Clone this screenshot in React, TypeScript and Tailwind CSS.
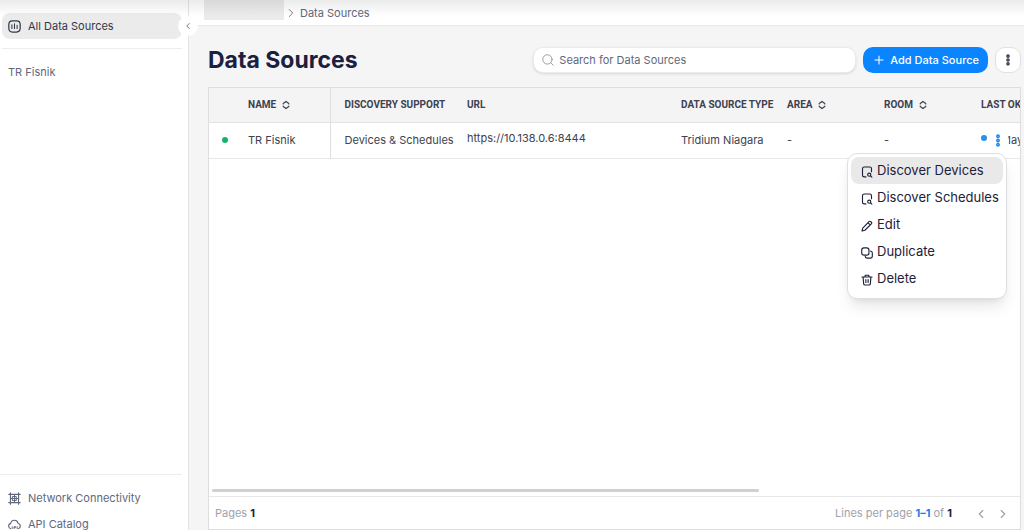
import { ChevronLeft, ChevronRight, Plus, Search } from 'lucide-react'
import type { ReactNode } from 'react'

type IconProps = { className?: string }

const Icon = ({ className = '', children }: IconProps & { children: ReactNode }) => (
  <svg
    viewBox="0 0 16 16"
    fill="none"
    stroke="currentColor"
    strokeWidth="1.5"
    strokeLinecap="round"
    strokeLinejoin="round"
    className={`shrink-0 ${className}`}
    aria-hidden="true"
  >
    {children}
  </svg>
)

const DataSourcesIcon = ({ className }: IconProps) => (
  <Icon className={className}>
    <path d="M5.5 1.2h5c2.900 0 4.500 1.500 4.500 4.500v4.600c0 3-1.600 4.500-4.500 4.500h-5C2.600 14.800 1 13.300 1 10.300V5.700c0-3 1.600-4.500 4.500-4.500z" />
    <path d="M4.800 6v4.500M8 4.800v5.700M11.200 6.500v4" strokeWidth="1.300" />
  </Icon>
)

const NetworkIcon = ({ className }: IconProps) => (
  <Icon className={className}>
    <path d="M1 3h14M1 13h14M3 1v14M13 1v14" strokeWidth="1.400" />
    <path d="M5.800 5.500h4.400v5H5.800zM8 3v10M3 8h10" strokeWidth="1.200" />
  </Icon>
)

const CatalogIcon = ({ className }: IconProps) => (
  <Icon className={className}>
    <path d="M3.500 13.200C-.4 12.200.2 7 3.300 6.900 4 1.400 11.500 1.600 12.200 6.500c3.700.5 3.900 5.700.5 6.700" strokeWidth="1.400" />
    <path d="M5.200 13v-2.400M7.600 13v-2.400h1.700v1.300H7.600M11.200 10.600V13" strokeWidth="1.100" />
  </Icon>
)

const DiscoverIcon = ({ className }: IconProps) => (
  <Icon className={className}>
    <path d="M6.500 14.500H4.300C2.800 14.500 2 13.700 2 12.200V3.600C2 2.100 2.800 1.300 4.300 1.300h7.400c1.500 0 2.300.8 2.300 2.300v4" />
    <circle cx="11" cy="11.600" r="2.100" />
    <path d="M12.800 13.300l1.700 1.500" />
  </Icon>
)

const EditIcon = ({ className }: IconProps) => (
  <Icon className={className}>
    <path d="M1.300 14.700l1-3.900 8.400-8.600c.7-.7 1.600-.7 2.300 0l.8.800c.7.700.7 1.600 0 2.300l-8.600 8.400zM9.400 3.700l2.900 2.900" />
  </Icon>
)

const DuplicateIcon = ({ className }: IconProps) => (
  <Icon className={className}>
    <rect x="1" y="1.200" width="9.600" height="9.600" rx="2.900" />
    <path d="M12.600 5.400c1.600.1 2.500 1 2.500 2.600v4c0 1.800-1 2.800-2.800 2.800h-4c-1.600 0-2.500-.8-2.600-2.300" />
  </Icon>
)

const DeleteIcon = ({ className }: IconProps) => (
  <Icon className={className}>
    <path d="M1.200 4h13.600M5.200 3.800l.5-2.200h4.600l.5 2.200M2.800 4.200l.7 8.600c.1 1.300.7 1.900 2 1.900h5c1.300 0 1.900-.6 2-1.900l.7-8.600M6.500 7.300v3.900M9.500 7.300v3.900" />
  </Icon>
)

const SortIcon = () => (
  <Icon className="h-[10px] w-2">
    <path d="M2.500 6V4.800L8 .8l5.500 4V6M2.500 10v1.200l5.500 4 5.500-4V10" strokeWidth="2.400" />
  </Icon>
)

const DotsIcon = ({ className = '' }: IconProps) => (
  <svg viewBox="0 0 6 14" fill="none" stroke="currentColor" strokeWidth="1.600" className={className} aria-hidden="true">
    <circle cx="3" cy="2.500" r="1.300" />
    <circle cx="3" cy="7" r="1.300" />
    <circle cx="3" cy="11.500" r="1.300" />
  </svg>
)

const columns = [
  { label: '', width: 'w-[31px]' },
  { label: 'NAME', sortable: true, width: 'w-[90px]' },
  { label: 'DISCOVERY SUPPORT', width: 'w-[123px]' },
  { label: 'URL', width: 'w-[214px]' },
  { label: 'DATA SOURCE TYPE', width: 'w-[106px]' },
  { label: 'AREA', sortable: true, width: 'w-[97px]' },
  { label: 'ROOM', sortable: true, width: 'w-[97px]' },
  { label: 'LAST OK', width: 'w-[200px]' },
]

const menuItems = [
  { label: 'Discover Devices', icon: DiscoverIcon, active: true },
  { label: 'Discover Schedules', icon: DiscoverIcon },
  { label: 'Edit', icon: EditIcon },
  { label: 'Duplicate', icon: DuplicateIcon },
  { label: 'Delete', icon: DeleteIcon },
]

const Sidebar = () => (
  <aside className="relative z-10 flex w-[189px] shrink-0 flex-col border-r border-[#e4e4e6] bg-white text-[11px] text-[#62677a]">
    <nav className="flex flex-col pt-[13px] pr-[6px] pl-[2px]">
      <a href="#all" className="flex h-[26px] items-center gap-[7px] rounded-lg bg-[#ebebeb] pl-[6px] text-[#33374a]">
        <DataSourcesIcon className="size-[13px]" />
        All Data Sources
      </a>
      <div className="mt-[9px] border-t border-[#eeeeef]" />
      <a href="#tr-fisnik" className="mt-[15px] pl-[6px] leading-4">TR Fisnik</a>
    </nav>
    <nav className="mt-auto mr-[6px] -mb-[2px] flex flex-col gap-[10px] border-t border-[#eeeeef] pt-[15px] pl-2 leading-4">
      <a href="#network" className="flex items-center gap-[7px]">
        <NetworkIcon className="size-[13px]" />
        Network Connectivity
      </a>
      <a href="#api" className="flex items-center gap-[7px]">
        <CatalogIcon className="size-[13px]" />
        API Catalog
      </a>
    </nav>
    <button
      aria-label="Collapse sidebar"
      className="absolute top-4 -right-[10px] flex size-5 items-center justify-center rounded-full bg-white text-[#55596a]"
    >
      <ChevronLeft size={10} />
    </button>
  </aside>
)

const RowMenu = () => (
  <div
    role="menu"
    className="absolute top-[65px] right-[13px] z-20 w-40 rounded-[10px] border border-[#dedfe3] bg-white p-[3px] pb-[6px] text-[13px] text-[#1c2138] shadow-lg"
  >
    {menuItems.map(({ label, icon: ItemIcon, active }) => (
      <button
        key={label}
        role="menuitem"
        className={`flex h-[27px] w-full items-center gap-1 rounded-lg pl-[10px] whitespace-nowrap ${active ? 'bg-[#e9e9ea]' : ''}`}
      >
        <ItemIcon className="mt-[2px] size-3" />
        {label}
      </button>
    ))}
  </div>
)

const SourcesTable = () => (
  <table className="w-[958px] table-fixed border-collapse text-left text-[11px] text-[#3d4150]">
    <thead className="bg-[#f4f4f4] font-[Roboto,sans-serif] text-[10px]">
      <tr className="h-[34px] border-b border-[#e2e2e4]">
        {columns.map((col, i) => (
          <th
            key={i}
            className={`p-0 font-bold whitespace-nowrap ${col.width} ${i === 1 ? 'border-r border-[#dedee1] pl-2' : ''} ${i > 1 ? 'pl-[14px]' : ''}`}
          >
            <span className="flex items-center gap-[6px]">
              {col.label}
              {col.sortable && <SortIcon />}
            </span>
          </th>
        ))}
      </tr>
    </thead>
    <tbody>
      <tr className="h-9 border-b border-[#e8e8ea] whitespace-nowrap">
        <td className="p-0">
          <span className="ml-[13px] block size-[6px] rounded-full bg-[#16b364]" />
        </td>
        <td className="border-r border-[#dedee1] p-0 pl-2">TR Fisnik</td>
        <td className="p-0 pl-[14px]">Devices &amp; Schedules</td>
        <td className="p-0 pb-1 pl-[14px]">https://10.138.0.6:8444</td>
        <td className="p-0 pl-[14px]">Tridium Niagara</td>
        <td className="p-0 pl-[14px]">-</td>
        <td className="p-0 pl-[14px]">-</td>
        <td className="p-0 pl-[14px]">
          <div className="flex items-center">
            <span className="mb-1 size-[6px] rounded-full bg-[#2590f0]" />
            {/* the row actions button covers the start of the date */}
            <button aria-label="Row actions" className="relative flex h-5 w-[22px] items-center justify-center rounded-full bg-white text-[#1687ee]">
              <DotsIcon className="h-[13px] w-[6px]" />
            </button>
            <span className="-ml-2">May</span>
          </div>
        </td>
      </tr>
    </tbody>
  </table>
)

const App = () => {
  return (
    <div className="relative flex h-screen overflow-hidden bg-[#f5f5f5] font-[Inter,'Liberation_Sans',sans-serif]">
      <Sidebar />

      <main className="flex min-w-0 flex-1 flex-col">
        <nav aria-label="Breadcrumb" className="flex h-[26px] shrink-0 items-end border-b border-[#e9e9ea] bg-white pb-1 pl-[15px] text-[11px] leading-4 text-[#62677a]">
          <span className="mb-[1px] h-5 w-20 bg-[#ebebeb]" />
          <ChevronRight size={14} strokeWidth={1.5} className="mb-[1px]" />
          <a href="#data-sources" className="ml-[2px]">Data Sources</a>
        </nav>

        <header className="flex items-center gap-[7px] pt-5 pr-[3px] pl-[19px]">
          <h1 className="text-[23px] leading-7 font-bold text-[#1a2040]">Data Sources</h1>
          <label className="ml-auto flex h-[26px] w-[323px] items-center gap-1 rounded-[10px] border border-[#ebebed] bg-white pl-[7px] text-[#8b8e99] shadow-sm">
            <Search size={14} strokeWidth={1.5} />
            <input
              type="text"
              aria-label="Search for Data Sources"
              placeholder="Search for Data Sources"
              className="min-w-0 flex-1 bg-transparent text-[11px] text-[#62677a] outline-none placeholder:text-[#62677a]"
            />
          </label>
          <button className="flex h-[26px] items-center gap-1 rounded-[10px] bg-[#0b84ff] px-[9px] text-[11px] font-medium whitespace-nowrap text-white">
            <Plus size={14} strokeWidth={1.8} />
            Add Data Source
          </button>
          <button aria-label="More actions" className="flex size-[26px] items-center justify-center rounded-[10px] border border-[#e0e0e3] bg-white text-[#33374a]">
            <DotsIcon className="h-3 w-[6px]" />
          </button>
        </header>

        <section className="relative mt-[13px] mr-[3px] ml-[19px] flex min-h-0 flex-1 flex-col border border-[#dedee1] bg-white">
          <div className="overflow-hidden">
            <SourcesTable />
          </div>
          <RowMenu />
          <div className="mt-auto px-[3px] pb-1">
            <div className="h-[3px] w-[68%] rounded-full bg-[#cfcfd4]" />
          </div>
          <footer className="flex h-[33px] items-center border-t border-[#e8e8ea] pt-[1px] pr-[10px] pl-[6px] text-[11px] text-[#a0a2ab]">
            <span>
              Pages <b className="font-bold text-[#1a2040]">1</b>
            </span>
            <span className="mr-[22px] ml-auto">
              Lines per page <b className="font-bold text-[#1a7fe8]">1–1</b> of <b className="font-bold text-[#1a2040]">1</b>
            </span>
            <button aria-label="Previous page">
              <ChevronLeft size={14} />
            </button>
            <button aria-label="Next page" className="ml-2">
              <ChevronRight size={14} />
            </button>
          </footer>
        </section>
      </main>

      {/* shade falling from the app bar */}
      <div className="pointer-events-none absolute inset-x-0 top-0 z-30 h-4 bg-linear-to-b from-black/8 to-transparent" />
    </div>
  )
}

export default App
